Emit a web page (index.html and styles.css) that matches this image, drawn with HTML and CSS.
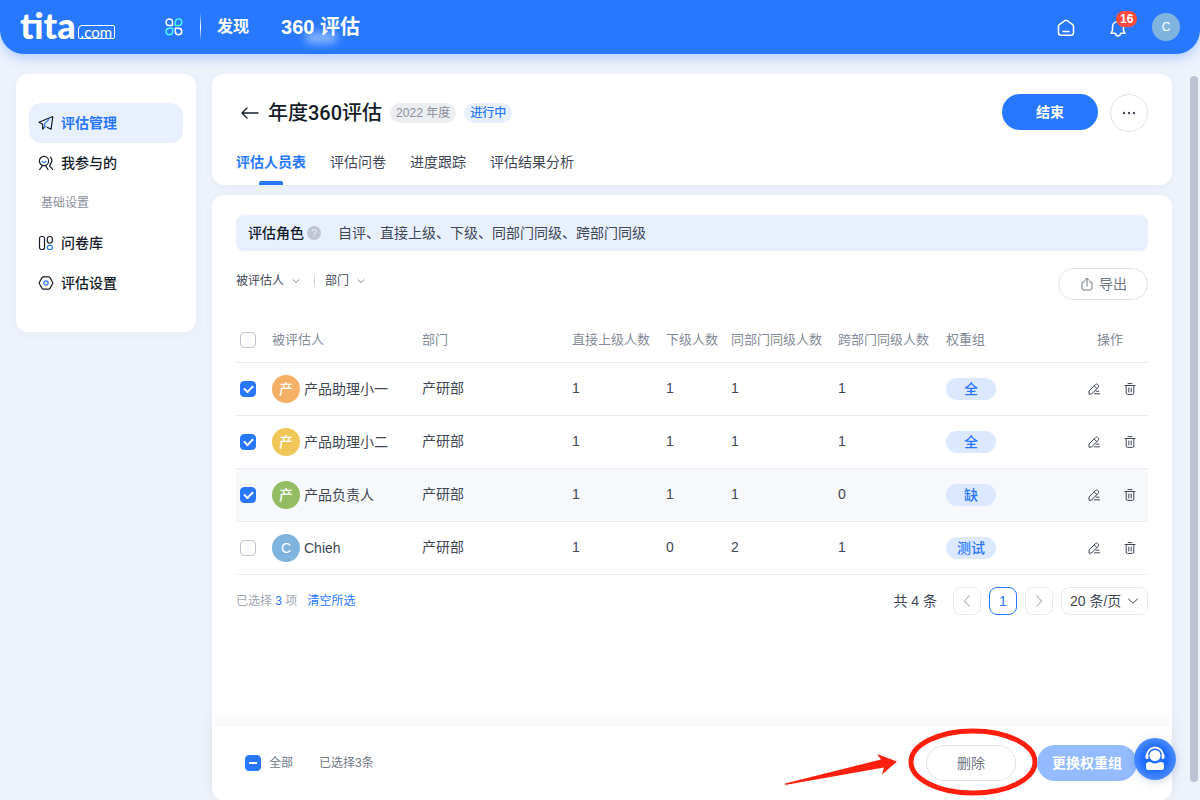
FILE: index.html
```html
<!DOCTYPE html>
<html lang="zh-CN">
<head>
<meta charset="utf-8">
<meta name="viewport" content="width=device-width, initial-scale=1">
<title>年度360评估</title>
<link rel="stylesheet" href="styles.css">
</head>
<body>
<svg class="defs" aria-hidden="true">
  <symbol id="edit" viewBox="0 0 12 12"><path d="M1 10.800V8L7.600 1.500a1.400 1.400 0 0 1 2 0l.7.700a1.400 1.400 0 0 1 0 2L3.800 10.800zM6.300 3l2.600 2.600M8 8.200h3M6.500 10.800h5"/></symbol>
  <symbol id="trash" viewBox="0 0 12 12"><path d="M1 2.500h10M4 .6h4M2.200 2.500v7.500q0 1.400 1.400 1.400h4.800q1.400 0 1.400-1.400V2.500M4.800 5v4M7.200 5v4"/></symbol>
  <symbol id="down" viewBox="0 0 12 12"><path d="M1.500 4 6 8.200 10.500 4"/></symbol>
</svg>

<header class="topbar">
  <a class="logo" href="#">tita<span class="logo-com">.com</span></a>
  <button class="icon-btn apps" aria-label="应用">
    <svg width="18" height="18" viewBox="0 0 18 18">
      <path d="M4.300 1a3.250 3.250 0 0 0 0 6.500H7.500V4.200A3.200 3.200 0 0 0 4.300 1z"/>
      <path class="cyan" d="M10.300 7.500V4.200A3.250 3.250 0 1 1 13.500 7.500z"/>
      <path class="cyan" d="M7.600 10.300v3.300a3.250 3.250 0 1 1-3.300-3.300z"/>
      <path d="M10.300 10.300h3.300a3.250 3.250 0 1 1-3.300 3.300z"/>
    </svg>
  </button>
  <span class="top-divider"></span>
  <nav class="topnav">
    <a class="top-link" href="#">发现</a>
    <a class="top-link top-active" href="#">360 评估</a>
  </nav>
  <div class="tools">
    <button class="icon-btn" aria-label="首页">
      <svg width="18" height="18" viewBox="0 0 18 18"><path d="M1.500 7.200q0-1 .8-1.600L7.900 1.600q1.100-.8 2.200 0l5.600 4q.8.600.8 1.600v6.600q0 2.500-2.500 2.500H4q-2.500 0-2.500-2.500zM6 12.500h6"/></svg>
    </button>
    <button class="icon-btn bell" aria-label="通知">
      <svg width="18" height="18" viewBox="0 0 18 18"><path d="M9 2.500c-3.300 0-5.500 2.300-5.500 5.300v3.700L2 14.300h4.300Q7 17 9 17t2.700-2.700H16l-1.500-2.800V7.800c0-3-2.200-5.300-5.500-5.300z"/></svg>
      <span class="badge">16</span>
    </button>
    <span class="avatar avatar-blue avatar-small">C</span>
  </div>
</header>

<div class="layout">
  <nav class="sidebar">
    <a class="side-item side-active" href="#">
      <svg width="16" height="16" viewBox="0 0 16 16"><path d="M4.700 9.200 1 7.300 14.800 1.500l-1.700 12.700-4-2M4.700 9.200v5l2.300-2.500"/><path class="blue" d="m6.500 12.500.3-3.800 4-4"/></svg>
      评估管理</a>
    <a class="side-item" href="#">
      <svg width="16" height="16" viewBox="0 0 16 16"><circle cx="6" cy="6" r="4.600"/><path d="m4.500 10.500-2.800 4M7.500 10.500l2.500 4M12.300 2.200q3.300 3.300 0 6.800M12.500 9.500q-1.500 1.500 0 2.500t2 2.500"/><path class="blue" d="M4 6.300q2 2.500 4 0"/></svg>
      我参与的</a>
    <div class="side-group">基础设置</div>
    <a class="side-item" href="#">
      <svg width="16" height="16" viewBox="0 0 16 16"><rect x="1.500" y="1.500" width="5" height="13" rx="2"/><rect x="9.300" y="1.500" width="5" height="6.500" rx="2.200"/><rect class="blue" x="9.300" y="10.300" width="5" height="4.200" rx="2"/></svg>
      问卷库</a>
    <a class="side-item" href="#">
      <svg width="16" height="16" viewBox="0 0 16 16"><path d="M5.200 1.800h5.600q.7 0 1 .6l2.800 4.900q.4.700 0 1.400l-2.800 4.900q-.3.600-1 .6H5.200q-.7 0-1-.6L1.400 8.700q-.4-.7 0-1.400l2.800-4.900q.3-.6 1-.6z"/><circle class="blue" cx="8" cy="8" r="2.200"/></svg>
      评估设置</a>
  </nav>

  <main class="main">
    <section class="card heading">
      <div class="title-row">
        <button class="icon-btn back" aria-label="返回"><svg width="20" height="14" viewBox="0 0 20 14"><path d="M18 7H2M7 2 2 7l5 5"/></svg></button>
        <h1>年度360评估</h1>
        <span class="tag tag-gray">2022 年度</span>
        <span class="tag tag-blue">进行中</span>
        <div class="title-actions">
          <button class="btn btn-primary">结束</button>
          <button class="more" aria-label="更多"><svg width="14" height="4" viewBox="0 0 14 4"><circle cx="2" cy="2" r="1.200"/><circle cx="7" cy="2" r="1.200"/><circle cx="12" cy="2" r="1.200"/></svg></button>
        </div>
      </div>
      <nav class="tabs">
        <a class="tab tab-active" href="#">评估人员表</a>
        <a class="tab" href="#">评估问卷</a>
        <a class="tab" href="#">进度跟踪</a>
        <a class="tab" href="#">评估结果分析</a>
      </nav>
    </section>

    <section class="card content">
      <div class="body">
        <div class="roles"><strong>评估角色</strong><span class="help">?</span><span>自评、直接上级、下级、同部门同级、跨部门同级</span></div>
        <div class="filters">
          <button class="filter">被评估人<svg width="8" height="8"><use href="#down"/></svg></button>
          <span class="filter-divider"></span>
          <button class="filter">部门<svg width="8" height="8"><use href="#down"/></svg></button>
          <button class="btn btn-outline export"><svg width="12" height="14" viewBox="0 0 12 14"><path d="M3.500 5H2Q1 5 1 6v5q0 2 2 2h6q2 0 2-2V6q0-1-1-1H8.500M6 9V1.500M3.700 3.500 6 1.300l2.300 2.200"/></svg>导出</button>
        </div>
        <table class="people">
          <colgroup><col class="c-check"><col class="c-name"><col class="c-dept"><col class="c-up"><col class="c-low"><col class="c-same"><col class="c-cross"><col class="c-group"><col class="c-ops"></colgroup>
          <thead><tr>
            <th><input type="checkbox" aria-label="选择本页"></th><th>被评估人</th><th>部门</th><th>直接上级人数</th><th>下级人数</th><th>同部门同级人数</th><th>跨部门同级人数</th><th>权重组</th><th class="ops-head">操作</th>
          </tr></thead>
          <tbody>
            <tr>
              <td><input type="checkbox" checked aria-label="选择 产品助理小一"></td>
              <td><div class="person"><span class="avatar avatar-orange">产</span>产品助理小一</div></td>
              <td class="text">产研部</td><td class="text">1</td><td class="text">1</td><td class="text">1</td><td class="text">1</td><td><span class="group">全</span></td>
              <td><div class="ops"><button class="icon-btn" aria-label="编辑"><svg width="12" height="12"><use href="#edit"/></svg></button><button class="icon-btn" aria-label="删除"><svg width="12" height="12"><use href="#trash"/></svg></button></div></td>
            </tr>
            <tr>
              <td><input type="checkbox" checked aria-label="选择 产品助理小二"></td>
              <td><div class="person"><span class="avatar avatar-yellow">产</span>产品助理小二</div></td>
              <td class="text">产研部</td><td class="text">1</td><td class="text">1</td><td class="text">1</td><td class="text">1</td><td><span class="group">全</span></td>
              <td><div class="ops"><button class="icon-btn" aria-label="编辑"><svg width="12" height="12"><use href="#edit"/></svg></button><button class="icon-btn" aria-label="删除"><svg width="12" height="12"><use href="#trash"/></svg></button></div></td>
            </tr>
            <tr class="row-hover">
              <td><input type="checkbox" checked aria-label="选择 产品负责人"></td>
              <td><div class="person"><span class="avatar avatar-green">产</span>产品负责人</div></td>
              <td class="text">产研部</td><td class="text">1</td><td class="text">1</td><td class="text">1</td><td class="text">0</td><td><span class="group">缺</span></td>
              <td><div class="ops"><button class="icon-btn" aria-label="编辑"><svg width="12" height="12"><use href="#edit"/></svg></button><button class="icon-btn" aria-label="删除"><svg width="12" height="12"><use href="#trash"/></svg></button></div></td>
            </tr>
            <tr>
              <td><input type="checkbox" aria-label="选择 Chieh"></td>
              <td><div class="person"><span class="avatar avatar-blue">C</span>Chieh</div></td>
              <td class="text">产研部</td><td class="text">1</td><td class="text">0</td><td class="text">2</td><td class="text">1</td><td><span class="group">测试</span></td>
              <td><div class="ops"><button class="icon-btn" aria-label="编辑"><svg width="12" height="12"><use href="#edit"/></svg></button><button class="icon-btn" aria-label="删除"><svg width="12" height="12"><use href="#trash"/></svg></button></div></td>
            </tr>
          </tbody>
        </table>
        <div class="pager">
          <span class="selected">已选择 <b>3</b> 项</span>
          <a class="clear" href="#">清空所选</a>
          <span class="total">共 4 条</span>
          <button class="page" aria-label="上一页"><svg class="prev" width="14" height="14"><use href="#down"/></svg></button>
          <button class="page page-current">1</button>
          <button class="page" aria-label="下一页"><svg class="next" width="14" height="14"><use href="#down"/></svg></button>
          <span class="size"><select aria-label="每页条数"><option>20 条/页</option></select><svg width="12" height="12"><use href="#down"/></svg></span>
        </div>
      </div>

      <footer class="bulk">
        <label class="all"><input id="all" class="mixed" type="checkbox">全部</label>
        <span>已选择3条</span>
        <div class="bulk-actions">
          <div class="marked">
            <button class="btn btn-outline delete">删除</button>
            <svg class="mark" width="254" height="70" viewBox="0 0 254 70" aria-hidden="true"><ellipse cx="190" cy="35" rx="62" ry="31"/><path d="M2 56.500 98 32.500l-4-5.500 20 7.500-15 13 2-7L2 58z"/></svg>
          </div>
          <button class="btn btn-soft">更换权重组</button>
        </div>
        <button class="support" aria-label="客服">
          <svg width="22" height="26" viewBox="0 0 22 26"><path class="band" d="M3 11V9.500a8 8 0 0 1 16 0V11"/><circle cx="11" cy="9.500" r="5.500"/><rect x="1.500" y="8" width="3" height="5" rx="1.500"/><rect x="17.500" y="8" width="3" height="5" rx="1.500"/><path d="M2 19q0-3 3-3h1.500q4.500 3 9 0H17q3 0 3 3v2.500q0 2.500-2.500 2.500h-13Q2 24 2 21.500z"/></svg>
        </button>
      </footer>
    </section>
  </main>
</div>
<span class="scroll-thumb"></span>
</body>
</html>
```
FILE: styles.css
```css
* { box-sizing: border-box; }
body {
  margin: 0;
  min-height: 100vh;
  display: flex;
  flex-direction: column;
  background: #eef2fb;
  color: #3f4755;
  font: 14px/20px "Liberation Sans", "Noto Sans CJK SC", sans-serif;
}
button, select, input { font: inherit; color: inherit; margin: 0; }
button { cursor: pointer; }
a { color: inherit; text-decoration: none; }
svg { display: block; flex: none; fill: none; stroke: currentColor; stroke-linecap: round; stroke-linejoin: round; }
.defs { position: absolute; width: 0; height: 0; }
.icon-btn { display: flex; padding: 0; border: 0; background: none; }

.topbar {
  display: flex;
  align-items: center;
  height: 54px;
  padding: 0 20px;
  border-radius: 0 0 24px 24px;
  background: #2878ff;
  color: #fff;
  box-shadow: 0 4px 12px rgba(40, 120, 255, .3);
}
.topbar svg { stroke-width: 1.500; }
.logo { display: flex; align-items: flex-end; width: 98px; padding-bottom: 4px; font: 900 36px/40px Lato, sans-serif; }
.logo-com {
  margin: 0 0 6px 2px;
  padding: 0 2px;
  border: 1px solid #fff;
  border-radius: 4px 2px 2px 2px;
  font: 15px/12px Lato, sans-serif;
}
.apps { margin-left: 47px; }
.cyan { stroke: #4df0ff; }
.top-divider { width: 1px; height: 28px; margin: 0 16px 0 17px; background: linear-gradient(transparent, #fff, transparent); }
.topnav { display: flex; align-items: center; gap: 32px; }
.top-link { font-size: 16px; font-weight: bold; }
.top-active { position: relative; font-size: 20px; }
.top-active::after {
  content: "";
  position: absolute;
  left: 24px;
  bottom: -6px;
  width: 32px;
  height: 10px;
  border-radius: 5px;
  background: rgba(255, 255, 255, .5);
  filter: blur(4px);
}
.tools { display: flex; align-items: center; margin-left: auto; gap: 34px; }
.tools svg { margin-top: 2px; }
.bell { position: relative; }
.badge {
  position: absolute;
  left: 7px;
  top: -6px;
  padding: 0 4px;
  border-radius: 8px;
  background: #ff4b3e;
  font-size: 12px;
  font-weight: bold;
  line-height: 16px;
}
.tools .avatar { margin-left: -9px; }

.layout { flex: 1; display: flex; align-items: flex-start; gap: 16px; padding: 20px 28px 0 16px; }
.sidebar, .card { background: #fff; border-radius: 12px; box-shadow: 0 2px 10px rgba(60, 90, 140, .05); }
.sidebar { flex: none; width: 180px; padding: 29px 13px; }
.side-item { display: flex; align-items: center; gap: 7px; height: 40px; padding-left: 9px; border-radius: 12px; color: #141c28; font-weight: 500; }
.side-item svg { stroke: #141c28; stroke-width: 1.200; }
.side-item .blue { stroke: #2878ff; }
.side-active { background: #e8f0fe; color: #2878ff; font-weight: bold; }
.side-group { padding-left: 12px; font-size: 12px; line-height: 40px; color: #8a909d; }

.main { flex: 1; min-width: 0; align-self: stretch; display: flex; flex-direction: column; gap: 10px; }
.heading { padding: 20px 24px 0; }
.title-row { display: flex; align-items: center; }
.back { margin-left: 4px; color: #141c28; }
.back svg { stroke-width: 1.300; }
h1 { margin: 0 8px; font: 500 20px/28px Roboto, "Noto Sans CJK SC", sans-serif; color: #141c28; }
.tag { padding: 0 6px; border-radius: 10px; font-size: 12px; line-height: 20px; }
.tag-gray { background: #ebedf0; color: #8a909d; }
.tag-blue { margin-left: 8px; background: #e8f0fe; color: #2878ff; font-weight: 500; }
.title-actions { display: flex; align-items: flex-start; gap: 12px; margin-left: auto; }
.btn { display: flex; align-items: center; justify-content: center; height: 36px; border: 0; border-radius: 18px; padding: 0; }
.btn-primary { width: 96px; background: #2878ff; color: #fff; font-weight: bold; }
.more { display: flex; align-items: center; justify-content: center; width: 38px; height: 38px; padding: 0; border: 1px solid #dfe2ea; border-radius: 50%; background: #fff; }
.more svg { fill: #3f4755; stroke: none; }
.tabs { display: flex; gap: 24px; margin-top: 20px; }
.tab { display: flex; flex-direction: column; align-items: center; height: 33px; }
.tab-active { color: #2878ff; font-weight: bold; }
.tab-active::after { content: ""; width: 24px; height: 4px; margin-top: auto; border-radius: 2px 2px 0 0; background: #2878ff; }

.content { flex: 1; display: flex; flex-direction: column; }
.body { flex: 1; padding: 20px 24px 0; }
.roles { display: flex; align-items: center; height: 36px; padding: 0 12px; border-radius: 8px; background: #e8f0fe; }
.roles strong { font-weight: 500; color: #141c28; }
.help { width: 14px; height: 14px; margin: 0 17px 0 3px; border-radius: 50%; background: #bfc5d1; color: #e8ecf4; font-size: 11px; line-height: 14px; text-align: center; }
.filters { display: flex; align-items: flex-start; margin-top: 17px; height: 50px; }
.filter { display: flex; align-items: center; gap: 8px; padding: 0; border: 0; background: none; font-size: 12px; line-height: 26px; }
.filter-divider { width: 1px; height: 16px; margin: 5px 10px 0 14px; background: linear-gradient(transparent, #b9bec9, transparent); }
.btn-outline { border: 1px solid #dfe2ea; background: #fff; color: #6f7785; }
.export { gap: 6px; width: 90px; height: 32px; margin-left: auto; padding-left: 2px; }

.people { width: 100%; table-layout: fixed; border-collapse: collapse; }
.c-check { width: 36px; }
.c-dept { width: 150px; }
.c-up { width: 94px; }
.c-low { width: 65px; }
.c-same { width: 107px; }
.c-cross { width: 108px; }
.c-group { width: 126px; }
.c-ops { width: 76px; }
th, td { padding: 0; border-bottom: 1px solid #e9ebef; text-align: left; }
th { height: 44px; font-size: 13px; font-weight: 400; color: #858c99; }
td { height: 53px; }
.text { padding-bottom: 2px; }
.ops-head { text-align: center; }
.row-hover { background: #f6f8fb; }
input[type="checkbox"] {
  appearance: none;
  display: flex;
  align-items: center;
  justify-content: center;
  width: 16px;
  height: 16px;
  border: 1px solid #bcc2d0;
  border-radius: 4px;
  background: #fff;
}
td input, th input { margin-left: 4px; }
input[type="checkbox"]:checked, input[type="checkbox"].mixed { border-color: #2878ff; background: #2878ff; }
input:checked::after { content: ""; box-sizing: border-box; width: 9px; height: 6px; margin-bottom: 2px; border: solid #fff; border-width: 0 0 2px 2px; transform: rotate(-45deg); }
input.mixed::after { content: ""; width: 8px; height: 2px; background: #fff; }
.person { display: flex; align-items: center; gap: 4px; }
.avatar { flex: none; width: 28px; height: 28px; border-radius: 50%; color: #fff; font-weight: 500; line-height: 28px; text-align: center; }
.avatar-small { font-size: 12px; }
.avatar-orange { background: #f5b066; }
.avatar-yellow { background: #f0c659; }
.avatar-green { background: #94bd63; }
.avatar-blue { background: #7fb4df; }
.group { display: block; width: 50px; border-radius: 11px; background: #dce8fe; color: #2878ff; font-weight: 500; line-height: 22px; text-align: center; }
.ops { display: flex; justify-content: flex-end; gap: 24px; padding-right: 12px; }

.pager { display: flex; align-items: center; gap: 8px; margin-top: 12px; }
.selected, .clear { font-size: 12px; }
.selected { padding-right: 2px; color: #a0a6b2; }
.selected b { font-weight: 400; }
.selected b, .clear { color: #2878ff; }
.total { margin: 0 8px 0 auto; }
.page { display: flex; align-items: center; justify-content: center; width: 28px; height: 28px; padding: 0; border: 1px solid #e6e8ee; border-radius: 8px; background: #fff; color: #b9c0ce; }
.page-current { border-color: #2878ff; color: #2878ff; }
.prev { transform: rotate(90deg); }
.next { transform: rotate(-90deg); }
.size { position: relative; }
.size select { appearance: none; display: block; width: 87px; height: 28px; padding: 0 8px; border: 1px solid #e6e8ee; border-radius: 8px; background: #fff; }
.size svg { position: absolute; right: 9px; top: 8px; pointer-events: none; }

.bulk { position: relative; display: flex; align-items: center; gap: 26px; height: 74px; padding: 0 35px 0 33px; border-radius: 0 0 12px 12px; background: #fff; box-shadow: 0 -6px 14px rgba(60, 80, 120, .06); font-size: 12px; color: #6f7785; }
.all { display: flex; align-items: center; gap: 8px; }
.bulk-actions { display: flex; gap: 21px; margin-left: auto; font-size: 14px; }
.marked { position: relative; }
.delete { width: 90px; }
.mark { position: absolute; right: -21px; top: -18px; pointer-events: none; }
.mark ellipse { stroke: #ff1f0f; stroke-width: 5; }
.mark path { fill: #ff1f0f; stroke: none; }
.btn-soft { width: 100px; background: #94bbff; color: #fff; font-weight: bold; }
.support { position: absolute; right: -4px; top: 12px; display: flex; align-items: center; justify-content: center; width: 42px; height: 42px; padding: 0; border: 0; border-radius: 50%; background: radial-gradient(#1f6dff 40%, #77a8ff); color: #fff; box-shadow: 0 2px 8px rgba(40, 80, 160, .2); }
.support svg { fill: #fff; stroke: none; }
.support .band { fill: none; stroke: #fff; stroke-width: 2; }

.scroll-thumb { position: fixed; right: 2px; top: 76px; bottom: 18px; width: 8px; border-radius: 4px; background: #bcc3d3; }
```
